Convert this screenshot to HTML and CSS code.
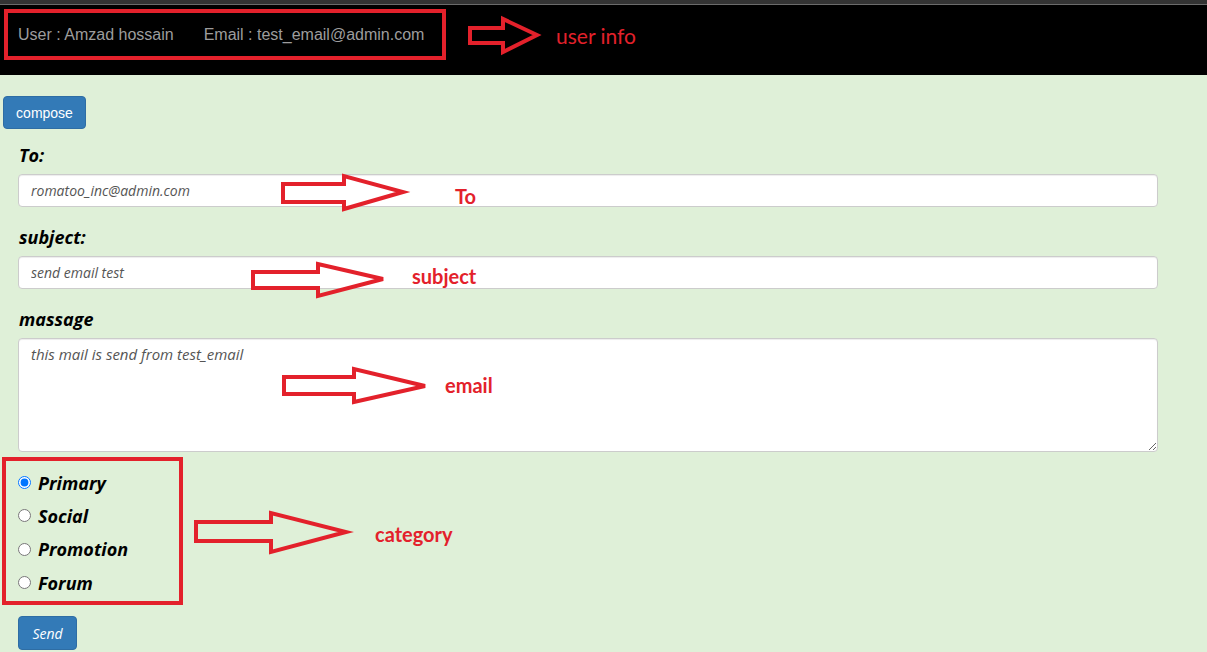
FILE: index.html
```html
<!DOCTYPE html>
<html>
<head>
<meta charset="utf-8">
<title>Compose</title>
<link rel="stylesheet" href="styles.css">
</head>
<body>
<div class="topstrip"></div>
<header class="header">
  <div class="userinfo">
    <span class="user">User : Amzad hossain</span>
    <span class="email">Email : test_email@admin.com</span>
  </div>
</header>
<main class="main">
  <button class="btn compose">compose</button>
  <form class="form">
    <label class="label">To:</label>
    <input class="field" type="text" value="romatoo_inc@admin.com">
    <label class="label">subject:</label>
    <input class="field" type="text" value="send email test">
    <label class="label">massage</label>
    <textarea class="field area" spellcheck="false">this mail is send from test_email</textarea>
    <div class="radios">
      <label class="radio"><input type="radio" name="cat" checked><span>Primary</span></label>
      <label class="radio"><input type="radio" name="cat"><span>Social</span></label>
      <label class="radio"><input type="radio" name="cat"><span>Promotion</span></label>
      <label class="radio"><input type="radio" name="cat"><span>Forum</span></label>
    </div>
    <button type="button" class="btn send">Send</button>
  </form>
</main>

<div class="annotations">
  <svg class="marks" width="1207" height="652" viewBox="0 0 1207 652">
    <g fill="none" stroke="#e3212b" stroke-width="4" stroke-linejoin="miter">
      <rect x="6" y="11" width="438" height="47"/>
      <rect x="4" y="459" width="177" height="144"/>
      <polygon points="470,28 503,28 503,19 537,35 503,52 503,43 470,43"/>
      <polygon points="283,184 344,184 344,176 403,192 344,209 344,202 283,202"/>
      <polygon points="253,272 318,272 318,264 383,279 318,296 318,288 253,288"/>
      <polygon points="284,377 354,377 354,369 425,386 354,402 354,394 284,394"/>
      <polygon points="196,522 271,522 271,513 346,532 271,552 271,541 196,541"/>
    </g>
  </svg>
  <span class="note note-user">user info</span>
  <span class="note bold note-to">To</span>
  <span class="note bold note-subject">subject</span>
  <span class="note bold note-email">email</span>
  <span class="note bold note-category">category</span>
</div>
</body>
</html>
```
FILE: styles.css
```css
* { box-sizing: border-box; }
html, body { margin: 0; padding: 0; }
body {
  width: 1207px;
  height: 652px;
  overflow: hidden;
  background: #dff0d8;
  position: relative;
  font-family: "Liberation Sans", Arial, sans-serif;
}
.topstrip {
  height: 5px;
  background: #333;
  border-bottom: 1px solid #6b6b6b;
}
.header {
  height: 70px;
  background: #000;
  padding: 20px 0 0 18px;
}
.userinfo {
  display: flex;
  gap: 30px;
  color: #9d9d9d;
  font-size: 16px;
  line-height: 20px;
}
.main {
  padding: 21px 0 0 3px;
}
.btn {
  display: block;
  border: 1px solid #2e6da4;
  background: #337ab7;
  color: #fff;
  border-radius: 4px;
  cursor: pointer;
}
.compose {
  height: 33px;
  width: 83px;
  font-family: "Liberation Sans", Arial, sans-serif;
  font-size: 14px;
  padding: 0;
}
.form {
  margin: 16px 0 0 15px;
  width: 1140px;
  display: flex;
  flex-direction: column;
  align-items: flex-start;
}
.label {
  display: block;
  font-family: "Open Sans", sans-serif;
  font-style: italic;
  font-weight: 700;
  font-size: 18px;
  line-height: 20px;
  color: #000;
  margin: 0 0 9px 1px;
}
.field {
  width: 1140px;
  height: 33px;
  border: 1px solid #ccc;
  border-radius: 4px;
  background: #fff;
  padding: 0 12px;
  font-family: "Open Sans", sans-serif;
  font-style: italic;
  font-size: 14px;
  color: #555;
  margin-bottom: 20px;
  box-shadow: inset 0 1px 1px rgba(0,0,0,.075);
  outline: none;
}
.area {
  height: 114px;
  padding: 6px 12px;
  resize: vertical;
  margin-bottom: 14px;
  font-size: 15px;
  line-height: 19px;
}
.radios {
  display: flex;
  flex-direction: column;
}
.radio {
  display: flex;
  align-items: center;
  height: 33.3px;
  gap: 7px;
  font-family: "Open Sans", sans-serif;
  font-style: italic;
  font-weight: 700;
  font-size: 18px;
  color: #000;
}
.radio input {
  margin: 0;
  width: 13px;
  height: 13px;
}
.send {
  margin-top: 17px;
  height: 34px;
  width: 59px;
  padding: 0;
  font-family: "Open Sans", sans-serif;
  font-style: italic;
  font-size: 14px;
}
.annotations {
  position: absolute;
  left: 0;
  top: 0;
  width: 1207px;
  height: 652px;
  pointer-events: none;
}
.marks {
  position: absolute;
  left: 0;
  top: 0;
}
.note {
  position: absolute;
  color: #e3212b;
  font-family: "Lato", "Open Sans", sans-serif;
  font-size: 20px;
  line-height: 24px;
  white-space: nowrap;
}
.bold { font-weight: 700; }
.note-user { left: 556px; top: 24px; font-size: 21px; }
.note-to { left: 455px; top: 184px; }
.note-subject { left: 412px; top: 264px; }
.note-email { left: 445px; top: 373px; }
.note-category { left: 375px; top: 522px; }
```
